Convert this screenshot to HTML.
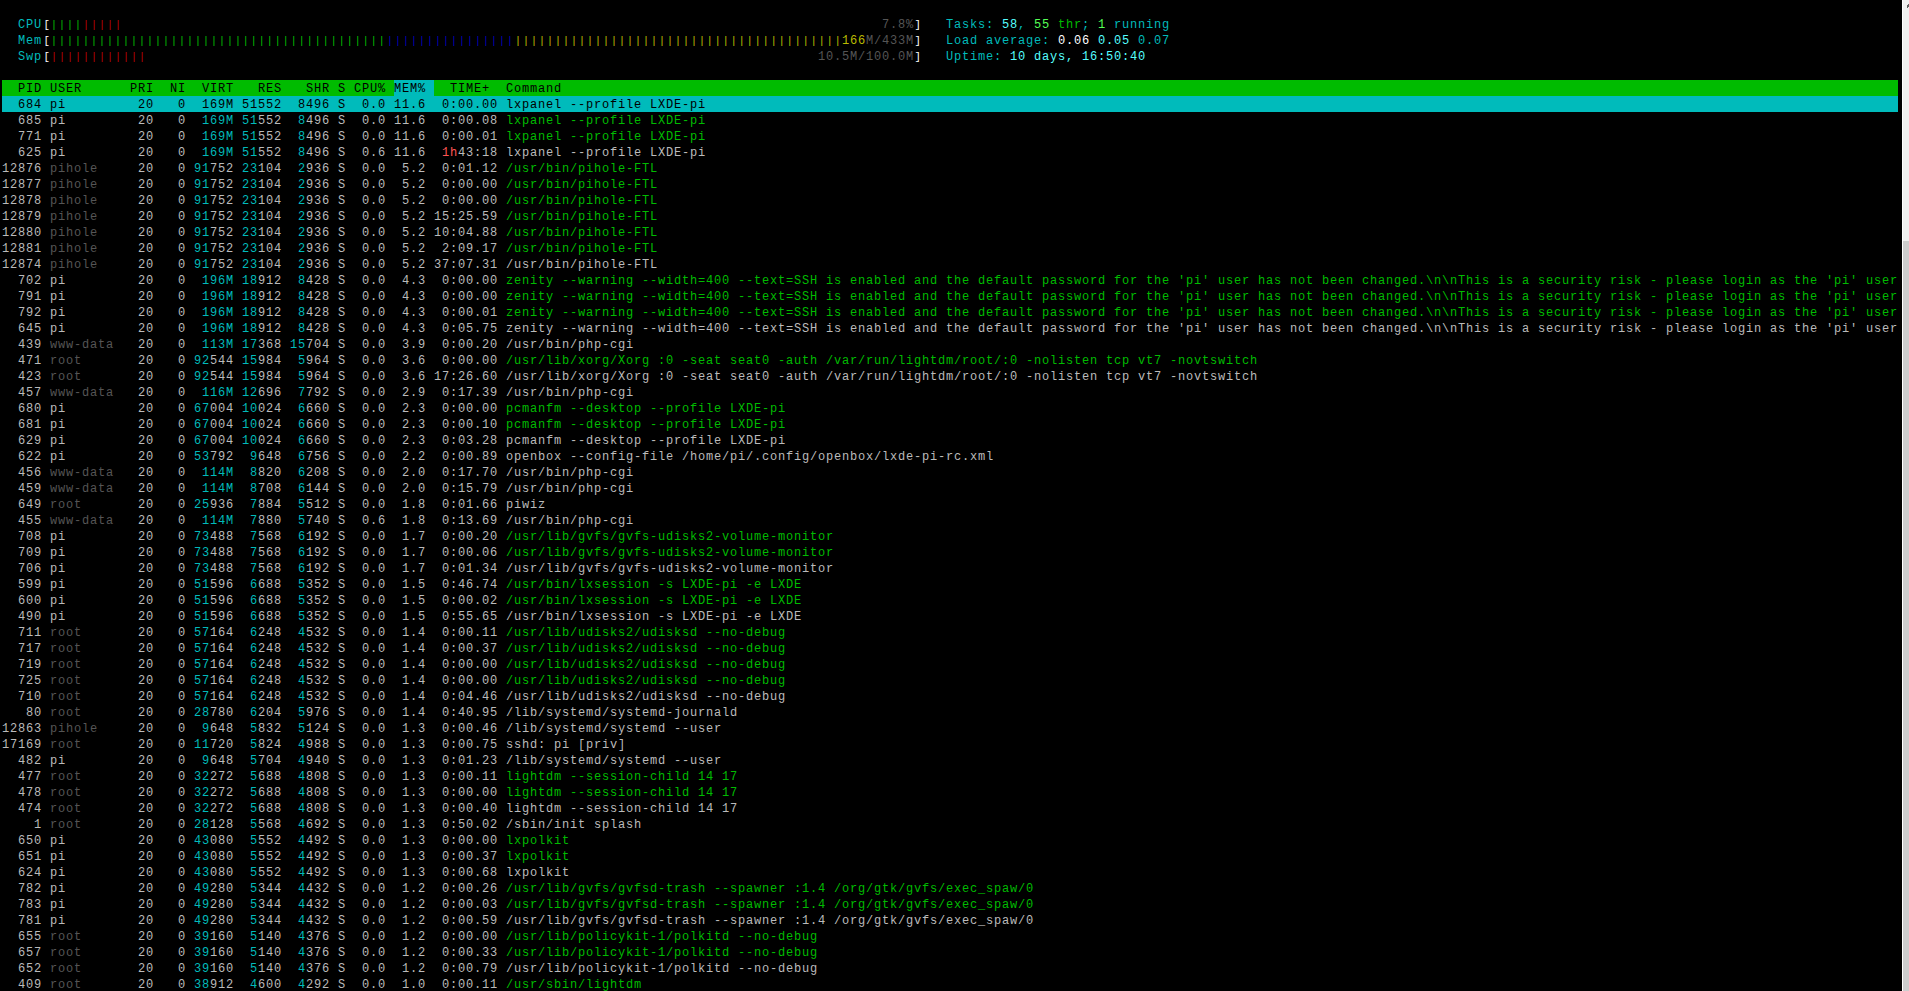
<!DOCTYPE html>
<html lang="en"><head><meta charset="utf-8"><title>htop</title>
<style>
html,body{margin:0;padding:0;background:#000;}
body{width:1909px;height:991px;overflow:hidden;position:relative;}
#term{position:absolute;left:0;top:1.0px;width:1902px;height:991px;font-family:"Liberation Mono","DejaVu Sans Mono",monospace;font-size:12.0px;letter-spacing:0.7988px;line-height:16px;color:#bbb;}
#term span.b{font-size:10.7px;letter-spacing:1.5790px;}
#term span{position:absolute;white-space:pre;height:16px;display:block;}
.bar{position:absolute;left:2px;width:1896px;height:16px;margin-top:-1.0px;}
#sb{position:absolute;left:1902px;top:0;width:7px;height:991px;background:#f0f0f0;border-left:1px solid #fff;box-sizing:border-box;}
#thumb{position:absolute;left:0;top:241px;width:6px;height:750px;background:#cdcdcd;}
</style></head>
<body>
<div id="term">
<span style="left:18px;top:16px;color:#00bbbb;">CPU</span>
<span class="b" style="left:43.6px;top:16px;color:#ffffff;">[</span>
<span class="b" style="left:50.8px;top:16px;color:#00bb00;">||||</span>
<span class="b" style="left:82.8px;top:16px;color:#bb0000;">|||||</span>
<span style="left:882px;top:16px;color:#555555;">7.8%</span>
<span class="b" style="left:914.5px;top:16px;color:#ffffff;">]</span>
<span style="left:18px;top:32px;color:#00bbbb;">Mem</span>
<span class="b" style="left:43.6px;top:32px;color:#ffffff;">[</span>
<span class="b" style="left:50.8px;top:32px;color:#00bb00;">||||||||||||||||||||||||||||||||||||||||||</span>
<span class="b" style="left:386.8px;top:32px;color:#0000bb;">||||||||||||||||</span>
<span class="b" style="left:514.8px;top:32px;color:#bbbb00;">|||||||||||||||||||||||||||||||||||||||||</span>
<span style="left:842px;top:32px;color:#bbbb00;">166</span>
<span style="left:866px;top:32px;color:#555555;">M/433M</span>
<span class="b" style="left:914.5px;top:32px;color:#ffffff;">]</span>
<span style="left:18px;top:48px;color:#00bbbb;">Swp</span>
<span class="b" style="left:43.6px;top:48px;color:#ffffff;">[</span>
<span class="b" style="left:50.8px;top:48px;color:#bb0000;">||||||||||||</span>
<span style="left:818px;top:48px;color:#555555;">10.5M/100.0M</span>
<span class="b" style="left:914.5px;top:48px;color:#ffffff;">]</span>
<span style="left:946px;top:16px;color:#00bbbb;">Tasks:</span>
<span style="left:1002px;top:16px;color:#55ffff;">58</span>
<span style="left:1018px;top:16px;color:#00bbbb;">,</span>
<span style="left:1034px;top:16px;color:#55ff55;">55</span>
<span style="left:1058px;top:16px;color:#00bb00;">thr</span>
<span style="left:1082px;top:16px;color:#00bbbb;">;</span>
<span style="left:1098px;top:16px;color:#55ff55;">1</span>
<span style="left:1114px;top:16px;color:#00bbbb;">running</span>
<span style="left:946px;top:32px;color:#00bbbb;">Load average:</span>
<span style="left:1058px;top:32px;color:#ffffff;">0.06</span>
<span style="left:1098px;top:32px;color:#55ffff;">0.05</span>
<span style="left:1138px;top:32px;color:#00bbbb;">0.07</span>
<span style="left:946px;top:48px;color:#00bbbb;">Uptime:</span>
<span style="left:1010px;top:48px;color:#55ffff;">10 days, 16:50:40</span>
<div class="bar" style="top:80px;background:#00bb00"></div>
<div class="bar" style="top:80px;left:394px;width:40px;background:#00bbbb"></div>
<span style="left:18px;top:80px;color:#000000;">PID USER      PRI  NI  VIRT   RES   SHR S CPU%</span>
<span style="left:394px;top:80px;color:#000000;">MEM%</span>
<span style="left:450px;top:80px;color:#000000;">TIME+  Command</span>
<div class="bar" style="top:96px;background:#00bbbb"></div>
<span style="left:2px;top:96px;color:#000000;">  684 pi         20   0  169M 51552  8496 S  0.0 11.6  0:00.00 lxpanel --profile LXDE-pi</span>
<span style="left:18px;top:112px;color:#bbbbbb;">685 pi         20   0</span>
<span style="left:202px;top:112px;color:#00bbbb;">169M 51</span>
<span style="left:258px;top:112px;color:#bbbbbb;">552</span>
<span style="left:298px;top:112px;color:#00bbbb;">8</span>
<span style="left:306px;top:112px;color:#bbbbbb;">496 S  0.0 11.6  0:00.08</span>
<span style="left:506px;top:112px;color:#00bb00;">lxpanel --profile LXDE-pi</span>
<span style="left:18px;top:128px;color:#bbbbbb;">771 pi         20   0</span>
<span style="left:202px;top:128px;color:#00bbbb;">169M 51</span>
<span style="left:258px;top:128px;color:#bbbbbb;">552</span>
<span style="left:298px;top:128px;color:#00bbbb;">8</span>
<span style="left:306px;top:128px;color:#bbbbbb;">496 S  0.0 11.6  0:00.01</span>
<span style="left:506px;top:128px;color:#00bb00;">lxpanel --profile LXDE-pi</span>
<span style="left:18px;top:144px;color:#bbbbbb;">625 pi         20   0</span>
<span style="left:202px;top:144px;color:#00bbbb;">169M 51</span>
<span style="left:258px;top:144px;color:#bbbbbb;">552</span>
<span style="left:298px;top:144px;color:#00bbbb;">8</span>
<span style="left:306px;top:144px;color:#bbbbbb;">496 S  0.6 11.6</span>
<span style="left:442px;top:144px;color:#ff5555;">1h</span>
<span style="left:458px;top:144px;color:#bbbbbb;">43:18 lxpanel --profile LXDE-pi</span>
<span style="left:2px;top:160px;color:#bbbbbb;">12876</span>
<span style="left:50px;top:160px;color:#555555;">pihole</span>
<span style="left:138px;top:160px;color:#bbbbbb;">20   0</span>
<span style="left:194px;top:160px;color:#00bbbb;">91</span>
<span style="left:210px;top:160px;color:#bbbbbb;">752</span>
<span style="left:242px;top:160px;color:#00bbbb;">23</span>
<span style="left:258px;top:160px;color:#bbbbbb;">104</span>
<span style="left:298px;top:160px;color:#00bbbb;">2</span>
<span style="left:306px;top:160px;color:#bbbbbb;">936 S  0.0  5.2  0:01.12</span>
<span style="left:506px;top:160px;color:#00bb00;">/usr/bin/pihole-FTL</span>
<span style="left:2px;top:176px;color:#bbbbbb;">12877</span>
<span style="left:50px;top:176px;color:#555555;">pihole</span>
<span style="left:138px;top:176px;color:#bbbbbb;">20   0</span>
<span style="left:194px;top:176px;color:#00bbbb;">91</span>
<span style="left:210px;top:176px;color:#bbbbbb;">752</span>
<span style="left:242px;top:176px;color:#00bbbb;">23</span>
<span style="left:258px;top:176px;color:#bbbbbb;">104</span>
<span style="left:298px;top:176px;color:#00bbbb;">2</span>
<span style="left:306px;top:176px;color:#bbbbbb;">936 S  0.0  5.2  0:00.00</span>
<span style="left:506px;top:176px;color:#00bb00;">/usr/bin/pihole-FTL</span>
<span style="left:2px;top:192px;color:#bbbbbb;">12878</span>
<span style="left:50px;top:192px;color:#555555;">pihole</span>
<span style="left:138px;top:192px;color:#bbbbbb;">20   0</span>
<span style="left:194px;top:192px;color:#00bbbb;">91</span>
<span style="left:210px;top:192px;color:#bbbbbb;">752</span>
<span style="left:242px;top:192px;color:#00bbbb;">23</span>
<span style="left:258px;top:192px;color:#bbbbbb;">104</span>
<span style="left:298px;top:192px;color:#00bbbb;">2</span>
<span style="left:306px;top:192px;color:#bbbbbb;">936 S  0.0  5.2  0:00.00</span>
<span style="left:506px;top:192px;color:#00bb00;">/usr/bin/pihole-FTL</span>
<span style="left:2px;top:208px;color:#bbbbbb;">12879</span>
<span style="left:50px;top:208px;color:#555555;">pihole</span>
<span style="left:138px;top:208px;color:#bbbbbb;">20   0</span>
<span style="left:194px;top:208px;color:#00bbbb;">91</span>
<span style="left:210px;top:208px;color:#bbbbbb;">752</span>
<span style="left:242px;top:208px;color:#00bbbb;">23</span>
<span style="left:258px;top:208px;color:#bbbbbb;">104</span>
<span style="left:298px;top:208px;color:#00bbbb;">2</span>
<span style="left:306px;top:208px;color:#bbbbbb;">936 S  0.0  5.2 15:25.59</span>
<span style="left:506px;top:208px;color:#00bb00;">/usr/bin/pihole-FTL</span>
<span style="left:2px;top:224px;color:#bbbbbb;">12880</span>
<span style="left:50px;top:224px;color:#555555;">pihole</span>
<span style="left:138px;top:224px;color:#bbbbbb;">20   0</span>
<span style="left:194px;top:224px;color:#00bbbb;">91</span>
<span style="left:210px;top:224px;color:#bbbbbb;">752</span>
<span style="left:242px;top:224px;color:#00bbbb;">23</span>
<span style="left:258px;top:224px;color:#bbbbbb;">104</span>
<span style="left:298px;top:224px;color:#00bbbb;">2</span>
<span style="left:306px;top:224px;color:#bbbbbb;">936 S  0.0  5.2 10:04.88</span>
<span style="left:506px;top:224px;color:#00bb00;">/usr/bin/pihole-FTL</span>
<span style="left:2px;top:240px;color:#bbbbbb;">12881</span>
<span style="left:50px;top:240px;color:#555555;">pihole</span>
<span style="left:138px;top:240px;color:#bbbbbb;">20   0</span>
<span style="left:194px;top:240px;color:#00bbbb;">91</span>
<span style="left:210px;top:240px;color:#bbbbbb;">752</span>
<span style="left:242px;top:240px;color:#00bbbb;">23</span>
<span style="left:258px;top:240px;color:#bbbbbb;">104</span>
<span style="left:298px;top:240px;color:#00bbbb;">2</span>
<span style="left:306px;top:240px;color:#bbbbbb;">936 S  0.0  5.2  2:09.17</span>
<span style="left:506px;top:240px;color:#00bb00;">/usr/bin/pihole-FTL</span>
<span style="left:2px;top:256px;color:#bbbbbb;">12874</span>
<span style="left:50px;top:256px;color:#555555;">pihole</span>
<span style="left:138px;top:256px;color:#bbbbbb;">20   0</span>
<span style="left:194px;top:256px;color:#00bbbb;">91</span>
<span style="left:210px;top:256px;color:#bbbbbb;">752</span>
<span style="left:242px;top:256px;color:#00bbbb;">23</span>
<span style="left:258px;top:256px;color:#bbbbbb;">104</span>
<span style="left:298px;top:256px;color:#00bbbb;">2</span>
<span style="left:306px;top:256px;color:#bbbbbb;">936 S  0.0  5.2 37:07.31 /usr/bin/pihole-FTL</span>
<span style="left:18px;top:272px;color:#bbbbbb;">702 pi         20   0</span>
<span style="left:202px;top:272px;color:#00bbbb;">196M 18</span>
<span style="left:258px;top:272px;color:#bbbbbb;">912</span>
<span style="left:298px;top:272px;color:#00bbbb;">8</span>
<span style="left:306px;top:272px;color:#bbbbbb;">428 S  0.0  4.3  0:00.00</span>
<span style="left:506px;top:272px;color:#00bb00;">zenity --warning --width=400 --text=SSH is enabled and the default password for the 'pi' user has not been changed.\n\nThis is a security risk - please login as the 'pi' user</span>
<span style="left:18px;top:288px;color:#bbbbbb;">791 pi         20   0</span>
<span style="left:202px;top:288px;color:#00bbbb;">196M 18</span>
<span style="left:258px;top:288px;color:#bbbbbb;">912</span>
<span style="left:298px;top:288px;color:#00bbbb;">8</span>
<span style="left:306px;top:288px;color:#bbbbbb;">428 S  0.0  4.3  0:00.00</span>
<span style="left:506px;top:288px;color:#00bb00;">zenity --warning --width=400 --text=SSH is enabled and the default password for the 'pi' user has not been changed.\n\nThis is a security risk - please login as the 'pi' user</span>
<span style="left:18px;top:304px;color:#bbbbbb;">792 pi         20   0</span>
<span style="left:202px;top:304px;color:#00bbbb;">196M 18</span>
<span style="left:258px;top:304px;color:#bbbbbb;">912</span>
<span style="left:298px;top:304px;color:#00bbbb;">8</span>
<span style="left:306px;top:304px;color:#bbbbbb;">428 S  0.0  4.3  0:00.01</span>
<span style="left:506px;top:304px;color:#00bb00;">zenity --warning --width=400 --text=SSH is enabled and the default password for the 'pi' user has not been changed.\n\nThis is a security risk - please login as the 'pi' user</span>
<span style="left:18px;top:320px;color:#bbbbbb;">645 pi         20   0</span>
<span style="left:202px;top:320px;color:#00bbbb;">196M 18</span>
<span style="left:258px;top:320px;color:#bbbbbb;">912</span>
<span style="left:298px;top:320px;color:#00bbbb;">8</span>
<span style="left:306px;top:320px;color:#bbbbbb;">428 S  0.0  4.3  0:05.75 zenity --warning --width=400 --text=SSH is enabled and the default password for the 'pi' user has not been changed.\n\nThis is a security risk - please login as the 'pi' user</span>
<span style="left:18px;top:336px;color:#bbbbbb;">439</span>
<span style="left:50px;top:336px;color:#555555;">www-data</span>
<span style="left:138px;top:336px;color:#bbbbbb;">20   0</span>
<span style="left:202px;top:336px;color:#00bbbb;">113M 17</span>
<span style="left:258px;top:336px;color:#bbbbbb;">368</span>
<span style="left:290px;top:336px;color:#00bbbb;">15</span>
<span style="left:306px;top:336px;color:#bbbbbb;">704 S  0.0  3.9  0:00.20 /usr/bin/php-cgi</span>
<span style="left:18px;top:352px;color:#bbbbbb;">471</span>
<span style="left:50px;top:352px;color:#555555;">root</span>
<span style="left:138px;top:352px;color:#bbbbbb;">20   0</span>
<span style="left:194px;top:352px;color:#00bbbb;">92</span>
<span style="left:210px;top:352px;color:#bbbbbb;">544</span>
<span style="left:242px;top:352px;color:#00bbbb;">15</span>
<span style="left:258px;top:352px;color:#bbbbbb;">984</span>
<span style="left:298px;top:352px;color:#00bbbb;">5</span>
<span style="left:306px;top:352px;color:#bbbbbb;">964 S  0.0  3.6  0:00.00</span>
<span style="left:506px;top:352px;color:#00bb00;">/usr/lib/xorg/Xorg :0 -seat seat0 -auth /var/run/lightdm/root/:0 -nolisten tcp vt7 -novtswitch</span>
<span style="left:18px;top:368px;color:#bbbbbb;">423</span>
<span style="left:50px;top:368px;color:#555555;">root</span>
<span style="left:138px;top:368px;color:#bbbbbb;">20   0</span>
<span style="left:194px;top:368px;color:#00bbbb;">92</span>
<span style="left:210px;top:368px;color:#bbbbbb;">544</span>
<span style="left:242px;top:368px;color:#00bbbb;">15</span>
<span style="left:258px;top:368px;color:#bbbbbb;">984</span>
<span style="left:298px;top:368px;color:#00bbbb;">5</span>
<span style="left:306px;top:368px;color:#bbbbbb;">964 S  0.0  3.6 17:26.60 /usr/lib/xorg/Xorg :0 -seat seat0 -auth /var/run/lightdm/root/:0 -nolisten tcp vt7 -novtswitch</span>
<span style="left:18px;top:384px;color:#bbbbbb;">457</span>
<span style="left:50px;top:384px;color:#555555;">www-data</span>
<span style="left:138px;top:384px;color:#bbbbbb;">20   0</span>
<span style="left:202px;top:384px;color:#00bbbb;">116M 12</span>
<span style="left:258px;top:384px;color:#bbbbbb;">696</span>
<span style="left:298px;top:384px;color:#00bbbb;">7</span>
<span style="left:306px;top:384px;color:#bbbbbb;">792 S  0.0  2.9  0:17.39 /usr/bin/php-cgi</span>
<span style="left:18px;top:400px;color:#bbbbbb;">680 pi         20   0</span>
<span style="left:194px;top:400px;color:#00bbbb;">67</span>
<span style="left:210px;top:400px;color:#bbbbbb;">004</span>
<span style="left:242px;top:400px;color:#00bbbb;">10</span>
<span style="left:258px;top:400px;color:#bbbbbb;">024</span>
<span style="left:298px;top:400px;color:#00bbbb;">6</span>
<span style="left:306px;top:400px;color:#bbbbbb;">660 S  0.0  2.3  0:00.00</span>
<span style="left:506px;top:400px;color:#00bb00;">pcmanfm --desktop --profile LXDE-pi</span>
<span style="left:18px;top:416px;color:#bbbbbb;">681 pi         20   0</span>
<span style="left:194px;top:416px;color:#00bbbb;">67</span>
<span style="left:210px;top:416px;color:#bbbbbb;">004</span>
<span style="left:242px;top:416px;color:#00bbbb;">10</span>
<span style="left:258px;top:416px;color:#bbbbbb;">024</span>
<span style="left:298px;top:416px;color:#00bbbb;">6</span>
<span style="left:306px;top:416px;color:#bbbbbb;">660 S  0.0  2.3  0:00.10</span>
<span style="left:506px;top:416px;color:#00bb00;">pcmanfm --desktop --profile LXDE-pi</span>
<span style="left:18px;top:432px;color:#bbbbbb;">629 pi         20   0</span>
<span style="left:194px;top:432px;color:#00bbbb;">67</span>
<span style="left:210px;top:432px;color:#bbbbbb;">004</span>
<span style="left:242px;top:432px;color:#00bbbb;">10</span>
<span style="left:258px;top:432px;color:#bbbbbb;">024</span>
<span style="left:298px;top:432px;color:#00bbbb;">6</span>
<span style="left:306px;top:432px;color:#bbbbbb;">660 S  0.0  2.3  0:03.28 pcmanfm --desktop --profile LXDE-pi</span>
<span style="left:18px;top:448px;color:#bbbbbb;">622 pi         20   0</span>
<span style="left:194px;top:448px;color:#00bbbb;">53</span>
<span style="left:210px;top:448px;color:#bbbbbb;">792</span>
<span style="left:250px;top:448px;color:#00bbbb;">9</span>
<span style="left:258px;top:448px;color:#bbbbbb;">648</span>
<span style="left:298px;top:448px;color:#00bbbb;">6</span>
<span style="left:306px;top:448px;color:#bbbbbb;">756 S  0.0  2.2  0:00.89 openbox --config-file /home/pi/.config/openbox/lxde-pi-rc.xml</span>
<span style="left:18px;top:464px;color:#bbbbbb;">456</span>
<span style="left:50px;top:464px;color:#555555;">www-data</span>
<span style="left:138px;top:464px;color:#bbbbbb;">20   0</span>
<span style="left:202px;top:464px;color:#00bbbb;">114M  8</span>
<span style="left:258px;top:464px;color:#bbbbbb;">820</span>
<span style="left:298px;top:464px;color:#00bbbb;">6</span>
<span style="left:306px;top:464px;color:#bbbbbb;">208 S  0.0  2.0  0:17.70 /usr/bin/php-cgi</span>
<span style="left:18px;top:480px;color:#bbbbbb;">459</span>
<span style="left:50px;top:480px;color:#555555;">www-data</span>
<span style="left:138px;top:480px;color:#bbbbbb;">20   0</span>
<span style="left:202px;top:480px;color:#00bbbb;">114M  8</span>
<span style="left:258px;top:480px;color:#bbbbbb;">708</span>
<span style="left:298px;top:480px;color:#00bbbb;">6</span>
<span style="left:306px;top:480px;color:#bbbbbb;">144 S  0.0  2.0  0:15.79 /usr/bin/php-cgi</span>
<span style="left:18px;top:496px;color:#bbbbbb;">649</span>
<span style="left:50px;top:496px;color:#555555;">root</span>
<span style="left:138px;top:496px;color:#bbbbbb;">20   0</span>
<span style="left:194px;top:496px;color:#00bbbb;">25</span>
<span style="left:210px;top:496px;color:#bbbbbb;">936</span>
<span style="left:250px;top:496px;color:#00bbbb;">7</span>
<span style="left:258px;top:496px;color:#bbbbbb;">884</span>
<span style="left:298px;top:496px;color:#00bbbb;">5</span>
<span style="left:306px;top:496px;color:#bbbbbb;">512 S  0.0  1.8  0:01.66 piwiz</span>
<span style="left:18px;top:512px;color:#bbbbbb;">455</span>
<span style="left:50px;top:512px;color:#555555;">www-data</span>
<span style="left:138px;top:512px;color:#bbbbbb;">20   0</span>
<span style="left:202px;top:512px;color:#00bbbb;">114M  7</span>
<span style="left:258px;top:512px;color:#bbbbbb;">880</span>
<span style="left:298px;top:512px;color:#00bbbb;">5</span>
<span style="left:306px;top:512px;color:#bbbbbb;">740 S  0.6  1.8  0:13.69 /usr/bin/php-cgi</span>
<span style="left:18px;top:528px;color:#bbbbbb;">708 pi         20   0</span>
<span style="left:194px;top:528px;color:#00bbbb;">73</span>
<span style="left:210px;top:528px;color:#bbbbbb;">488</span>
<span style="left:250px;top:528px;color:#00bbbb;">7</span>
<span style="left:258px;top:528px;color:#bbbbbb;">568</span>
<span style="left:298px;top:528px;color:#00bbbb;">6</span>
<span style="left:306px;top:528px;color:#bbbbbb;">192 S  0.0  1.7  0:00.20</span>
<span style="left:506px;top:528px;color:#00bb00;">/usr/lib/gvfs/gvfs-udisks2-volume-monitor</span>
<span style="left:18px;top:544px;color:#bbbbbb;">709 pi         20   0</span>
<span style="left:194px;top:544px;color:#00bbbb;">73</span>
<span style="left:210px;top:544px;color:#bbbbbb;">488</span>
<span style="left:250px;top:544px;color:#00bbbb;">7</span>
<span style="left:258px;top:544px;color:#bbbbbb;">568</span>
<span style="left:298px;top:544px;color:#00bbbb;">6</span>
<span style="left:306px;top:544px;color:#bbbbbb;">192 S  0.0  1.7  0:00.06</span>
<span style="left:506px;top:544px;color:#00bb00;">/usr/lib/gvfs/gvfs-udisks2-volume-monitor</span>
<span style="left:18px;top:560px;color:#bbbbbb;">706 pi         20   0</span>
<span style="left:194px;top:560px;color:#00bbbb;">73</span>
<span style="left:210px;top:560px;color:#bbbbbb;">488</span>
<span style="left:250px;top:560px;color:#00bbbb;">7</span>
<span style="left:258px;top:560px;color:#bbbbbb;">568</span>
<span style="left:298px;top:560px;color:#00bbbb;">6</span>
<span style="left:306px;top:560px;color:#bbbbbb;">192 S  0.0  1.7  0:01.34 /usr/lib/gvfs/gvfs-udisks2-volume-monitor</span>
<span style="left:18px;top:576px;color:#bbbbbb;">599 pi         20   0</span>
<span style="left:194px;top:576px;color:#00bbbb;">51</span>
<span style="left:210px;top:576px;color:#bbbbbb;">596</span>
<span style="left:250px;top:576px;color:#00bbbb;">6</span>
<span style="left:258px;top:576px;color:#bbbbbb;">688</span>
<span style="left:298px;top:576px;color:#00bbbb;">5</span>
<span style="left:306px;top:576px;color:#bbbbbb;">352 S  0.0  1.5  0:46.74</span>
<span style="left:506px;top:576px;color:#00bb00;">/usr/bin/lxsession -s LXDE-pi -e LXDE</span>
<span style="left:18px;top:592px;color:#bbbbbb;">600 pi         20   0</span>
<span style="left:194px;top:592px;color:#00bbbb;">51</span>
<span style="left:210px;top:592px;color:#bbbbbb;">596</span>
<span style="left:250px;top:592px;color:#00bbbb;">6</span>
<span style="left:258px;top:592px;color:#bbbbbb;">688</span>
<span style="left:298px;top:592px;color:#00bbbb;">5</span>
<span style="left:306px;top:592px;color:#bbbbbb;">352 S  0.0  1.5  0:00.02</span>
<span style="left:506px;top:592px;color:#00bb00;">/usr/bin/lxsession -s LXDE-pi -e LXDE</span>
<span style="left:18px;top:608px;color:#bbbbbb;">490 pi         20   0</span>
<span style="left:194px;top:608px;color:#00bbbb;">51</span>
<span style="left:210px;top:608px;color:#bbbbbb;">596</span>
<span style="left:250px;top:608px;color:#00bbbb;">6</span>
<span style="left:258px;top:608px;color:#bbbbbb;">688</span>
<span style="left:298px;top:608px;color:#00bbbb;">5</span>
<span style="left:306px;top:608px;color:#bbbbbb;">352 S  0.0  1.5  0:55.65 /usr/bin/lxsession -s LXDE-pi -e LXDE</span>
<span style="left:18px;top:624px;color:#bbbbbb;">711</span>
<span style="left:50px;top:624px;color:#555555;">root</span>
<span style="left:138px;top:624px;color:#bbbbbb;">20   0</span>
<span style="left:194px;top:624px;color:#00bbbb;">57</span>
<span style="left:210px;top:624px;color:#bbbbbb;">164</span>
<span style="left:250px;top:624px;color:#00bbbb;">6</span>
<span style="left:258px;top:624px;color:#bbbbbb;">248</span>
<span style="left:298px;top:624px;color:#00bbbb;">4</span>
<span style="left:306px;top:624px;color:#bbbbbb;">532 S  0.0  1.4  0:00.11</span>
<span style="left:506px;top:624px;color:#00bb00;">/usr/lib/udisks2/udisksd --no-debug</span>
<span style="left:18px;top:640px;color:#bbbbbb;">717</span>
<span style="left:50px;top:640px;color:#555555;">root</span>
<span style="left:138px;top:640px;color:#bbbbbb;">20   0</span>
<span style="left:194px;top:640px;color:#00bbbb;">57</span>
<span style="left:210px;top:640px;color:#bbbbbb;">164</span>
<span style="left:250px;top:640px;color:#00bbbb;">6</span>
<span style="left:258px;top:640px;color:#bbbbbb;">248</span>
<span style="left:298px;top:640px;color:#00bbbb;">4</span>
<span style="left:306px;top:640px;color:#bbbbbb;">532 S  0.0  1.4  0:00.37</span>
<span style="left:506px;top:640px;color:#00bb00;">/usr/lib/udisks2/udisksd --no-debug</span>
<span style="left:18px;top:656px;color:#bbbbbb;">719</span>
<span style="left:50px;top:656px;color:#555555;">root</span>
<span style="left:138px;top:656px;color:#bbbbbb;">20   0</span>
<span style="left:194px;top:656px;color:#00bbbb;">57</span>
<span style="left:210px;top:656px;color:#bbbbbb;">164</span>
<span style="left:250px;top:656px;color:#00bbbb;">6</span>
<span style="left:258px;top:656px;color:#bbbbbb;">248</span>
<span style="left:298px;top:656px;color:#00bbbb;">4</span>
<span style="left:306px;top:656px;color:#bbbbbb;">532 S  0.0  1.4  0:00.00</span>
<span style="left:506px;top:656px;color:#00bb00;">/usr/lib/udisks2/udisksd --no-debug</span>
<span style="left:18px;top:672px;color:#bbbbbb;">725</span>
<span style="left:50px;top:672px;color:#555555;">root</span>
<span style="left:138px;top:672px;color:#bbbbbb;">20   0</span>
<span style="left:194px;top:672px;color:#00bbbb;">57</span>
<span style="left:210px;top:672px;color:#bbbbbb;">164</span>
<span style="left:250px;top:672px;color:#00bbbb;">6</span>
<span style="left:258px;top:672px;color:#bbbbbb;">248</span>
<span style="left:298px;top:672px;color:#00bbbb;">4</span>
<span style="left:306px;top:672px;color:#bbbbbb;">532 S  0.0  1.4  0:00.00</span>
<span style="left:506px;top:672px;color:#00bb00;">/usr/lib/udisks2/udisksd --no-debug</span>
<span style="left:18px;top:688px;color:#bbbbbb;">710</span>
<span style="left:50px;top:688px;color:#555555;">root</span>
<span style="left:138px;top:688px;color:#bbbbbb;">20   0</span>
<span style="left:194px;top:688px;color:#00bbbb;">57</span>
<span style="left:210px;top:688px;color:#bbbbbb;">164</span>
<span style="left:250px;top:688px;color:#00bbbb;">6</span>
<span style="left:258px;top:688px;color:#bbbbbb;">248</span>
<span style="left:298px;top:688px;color:#00bbbb;">4</span>
<span style="left:306px;top:688px;color:#bbbbbb;">532 S  0.0  1.4  0:04.46 /usr/lib/udisks2/udisksd --no-debug</span>
<span style="left:26px;top:704px;color:#bbbbbb;">80</span>
<span style="left:50px;top:704px;color:#555555;">root</span>
<span style="left:138px;top:704px;color:#bbbbbb;">20   0</span>
<span style="left:194px;top:704px;color:#00bbbb;">28</span>
<span style="left:210px;top:704px;color:#bbbbbb;">780</span>
<span style="left:250px;top:704px;color:#00bbbb;">6</span>
<span style="left:258px;top:704px;color:#bbbbbb;">204</span>
<span style="left:298px;top:704px;color:#00bbbb;">5</span>
<span style="left:306px;top:704px;color:#bbbbbb;">976 S  0.0  1.4  0:40.95 /lib/systemd/systemd-journald</span>
<span style="left:2px;top:720px;color:#bbbbbb;">12863</span>
<span style="left:50px;top:720px;color:#555555;">pihole</span>
<span style="left:138px;top:720px;color:#bbbbbb;">20   0</span>
<span style="left:202px;top:720px;color:#00bbbb;">9</span>
<span style="left:210px;top:720px;color:#bbbbbb;">648</span>
<span style="left:250px;top:720px;color:#00bbbb;">5</span>
<span style="left:258px;top:720px;color:#bbbbbb;">832</span>
<span style="left:298px;top:720px;color:#00bbbb;">5</span>
<span style="left:306px;top:720px;color:#bbbbbb;">124 S  0.0  1.3  0:00.46 /lib/systemd/systemd --user</span>
<span style="left:2px;top:736px;color:#bbbbbb;">17169</span>
<span style="left:50px;top:736px;color:#555555;">root</span>
<span style="left:138px;top:736px;color:#bbbbbb;">20   0</span>
<span style="left:194px;top:736px;color:#00bbbb;">11</span>
<span style="left:210px;top:736px;color:#bbbbbb;">720</span>
<span style="left:250px;top:736px;color:#00bbbb;">5</span>
<span style="left:258px;top:736px;color:#bbbbbb;">824</span>
<span style="left:298px;top:736px;color:#00bbbb;">4</span>
<span style="left:306px;top:736px;color:#bbbbbb;">988 S  0.0  1.3  0:00.75 sshd: pi [priv]</span>
<span style="left:18px;top:752px;color:#bbbbbb;">482 pi         20   0</span>
<span style="left:202px;top:752px;color:#00bbbb;">9</span>
<span style="left:210px;top:752px;color:#bbbbbb;">648</span>
<span style="left:250px;top:752px;color:#00bbbb;">5</span>
<span style="left:258px;top:752px;color:#bbbbbb;">704</span>
<span style="left:298px;top:752px;color:#00bbbb;">4</span>
<span style="left:306px;top:752px;color:#bbbbbb;">940 S  0.0  1.3  0:01.23 /lib/systemd/systemd --user</span>
<span style="left:18px;top:768px;color:#bbbbbb;">477</span>
<span style="left:50px;top:768px;color:#555555;">root</span>
<span style="left:138px;top:768px;color:#bbbbbb;">20   0</span>
<span style="left:194px;top:768px;color:#00bbbb;">32</span>
<span style="left:210px;top:768px;color:#bbbbbb;">272</span>
<span style="left:250px;top:768px;color:#00bbbb;">5</span>
<span style="left:258px;top:768px;color:#bbbbbb;">688</span>
<span style="left:298px;top:768px;color:#00bbbb;">4</span>
<span style="left:306px;top:768px;color:#bbbbbb;">808 S  0.0  1.3  0:00.11</span>
<span style="left:506px;top:768px;color:#00bb00;">lightdm --session-child 14 17</span>
<span style="left:18px;top:784px;color:#bbbbbb;">478</span>
<span style="left:50px;top:784px;color:#555555;">root</span>
<span style="left:138px;top:784px;color:#bbbbbb;">20   0</span>
<span style="left:194px;top:784px;color:#00bbbb;">32</span>
<span style="left:210px;top:784px;color:#bbbbbb;">272</span>
<span style="left:250px;top:784px;color:#00bbbb;">5</span>
<span style="left:258px;top:784px;color:#bbbbbb;">688</span>
<span style="left:298px;top:784px;color:#00bbbb;">4</span>
<span style="left:306px;top:784px;color:#bbbbbb;">808 S  0.0  1.3  0:00.00</span>
<span style="left:506px;top:784px;color:#00bb00;">lightdm --session-child 14 17</span>
<span style="left:18px;top:800px;color:#bbbbbb;">474</span>
<span style="left:50px;top:800px;color:#555555;">root</span>
<span style="left:138px;top:800px;color:#bbbbbb;">20   0</span>
<span style="left:194px;top:800px;color:#00bbbb;">32</span>
<span style="left:210px;top:800px;color:#bbbbbb;">272</span>
<span style="left:250px;top:800px;color:#00bbbb;">5</span>
<span style="left:258px;top:800px;color:#bbbbbb;">688</span>
<span style="left:298px;top:800px;color:#00bbbb;">4</span>
<span style="left:306px;top:800px;color:#bbbbbb;">808 S  0.0  1.3  0:00.40 lightdm --session-child 14 17</span>
<span style="left:34px;top:816px;color:#bbbbbb;">1</span>
<span style="left:50px;top:816px;color:#555555;">root</span>
<span style="left:138px;top:816px;color:#bbbbbb;">20   0</span>
<span style="left:194px;top:816px;color:#00bbbb;">28</span>
<span style="left:210px;top:816px;color:#bbbbbb;">128</span>
<span style="left:250px;top:816px;color:#00bbbb;">5</span>
<span style="left:258px;top:816px;color:#bbbbbb;">568</span>
<span style="left:298px;top:816px;color:#00bbbb;">4</span>
<span style="left:306px;top:816px;color:#bbbbbb;">692 S  0.0  1.3  0:50.02 /sbin/init splash</span>
<span style="left:18px;top:832px;color:#bbbbbb;">650 pi         20   0</span>
<span style="left:194px;top:832px;color:#00bbbb;">43</span>
<span style="left:210px;top:832px;color:#bbbbbb;">080</span>
<span style="left:250px;top:832px;color:#00bbbb;">5</span>
<span style="left:258px;top:832px;color:#bbbbbb;">552</span>
<span style="left:298px;top:832px;color:#00bbbb;">4</span>
<span style="left:306px;top:832px;color:#bbbbbb;">492 S  0.0  1.3  0:00.00</span>
<span style="left:506px;top:832px;color:#00bb00;">lxpolkit</span>
<span style="left:18px;top:848px;color:#bbbbbb;">651 pi         20   0</span>
<span style="left:194px;top:848px;color:#00bbbb;">43</span>
<span style="left:210px;top:848px;color:#bbbbbb;">080</span>
<span style="left:250px;top:848px;color:#00bbbb;">5</span>
<span style="left:258px;top:848px;color:#bbbbbb;">552</span>
<span style="left:298px;top:848px;color:#00bbbb;">4</span>
<span style="left:306px;top:848px;color:#bbbbbb;">492 S  0.0  1.3  0:00.37</span>
<span style="left:506px;top:848px;color:#00bb00;">lxpolkit</span>
<span style="left:18px;top:864px;color:#bbbbbb;">624 pi         20   0</span>
<span style="left:194px;top:864px;color:#00bbbb;">43</span>
<span style="left:210px;top:864px;color:#bbbbbb;">080</span>
<span style="left:250px;top:864px;color:#00bbbb;">5</span>
<span style="left:258px;top:864px;color:#bbbbbb;">552</span>
<span style="left:298px;top:864px;color:#00bbbb;">4</span>
<span style="left:306px;top:864px;color:#bbbbbb;">492 S  0.0  1.3  0:00.68 lxpolkit</span>
<span style="left:18px;top:880px;color:#bbbbbb;">782 pi         20   0</span>
<span style="left:194px;top:880px;color:#00bbbb;">49</span>
<span style="left:210px;top:880px;color:#bbbbbb;">280</span>
<span style="left:250px;top:880px;color:#00bbbb;">5</span>
<span style="left:258px;top:880px;color:#bbbbbb;">344</span>
<span style="left:298px;top:880px;color:#00bbbb;">4</span>
<span style="left:306px;top:880px;color:#bbbbbb;">432 S  0.0  1.2  0:00.26</span>
<span style="left:506px;top:880px;color:#00bb00;">/usr/lib/gvfs/gvfsd-trash --spawner :1.4 /org/gtk/gvfs/exec_spaw/0</span>
<span style="left:18px;top:896px;color:#bbbbbb;">783 pi         20   0</span>
<span style="left:194px;top:896px;color:#00bbbb;">49</span>
<span style="left:210px;top:896px;color:#bbbbbb;">280</span>
<span style="left:250px;top:896px;color:#00bbbb;">5</span>
<span style="left:258px;top:896px;color:#bbbbbb;">344</span>
<span style="left:298px;top:896px;color:#00bbbb;">4</span>
<span style="left:306px;top:896px;color:#bbbbbb;">432 S  0.0  1.2  0:00.03</span>
<span style="left:506px;top:896px;color:#00bb00;">/usr/lib/gvfs/gvfsd-trash --spawner :1.4 /org/gtk/gvfs/exec_spaw/0</span>
<span style="left:18px;top:912px;color:#bbbbbb;">781 pi         20   0</span>
<span style="left:194px;top:912px;color:#00bbbb;">49</span>
<span style="left:210px;top:912px;color:#bbbbbb;">280</span>
<span style="left:250px;top:912px;color:#00bbbb;">5</span>
<span style="left:258px;top:912px;color:#bbbbbb;">344</span>
<span style="left:298px;top:912px;color:#00bbbb;">4</span>
<span style="left:306px;top:912px;color:#bbbbbb;">432 S  0.0  1.2  0:00.59 /usr/lib/gvfs/gvfsd-trash --spawner :1.4 /org/gtk/gvfs/exec_spaw/0</span>
<span style="left:18px;top:928px;color:#bbbbbb;">655</span>
<span style="left:50px;top:928px;color:#555555;">root</span>
<span style="left:138px;top:928px;color:#bbbbbb;">20   0</span>
<span style="left:194px;top:928px;color:#00bbbb;">39</span>
<span style="left:210px;top:928px;color:#bbbbbb;">160</span>
<span style="left:250px;top:928px;color:#00bbbb;">5</span>
<span style="left:258px;top:928px;color:#bbbbbb;">140</span>
<span style="left:298px;top:928px;color:#00bbbb;">4</span>
<span style="left:306px;top:928px;color:#bbbbbb;">376 S  0.0  1.2  0:00.00</span>
<span style="left:506px;top:928px;color:#00bb00;">/usr/lib/policykit-1/polkitd --no-debug</span>
<span style="left:18px;top:944px;color:#bbbbbb;">657</span>
<span style="left:50px;top:944px;color:#555555;">root</span>
<span style="left:138px;top:944px;color:#bbbbbb;">20   0</span>
<span style="left:194px;top:944px;color:#00bbbb;">39</span>
<span style="left:210px;top:944px;color:#bbbbbb;">160</span>
<span style="left:250px;top:944px;color:#00bbbb;">5</span>
<span style="left:258px;top:944px;color:#bbbbbb;">140</span>
<span style="left:298px;top:944px;color:#00bbbb;">4</span>
<span style="left:306px;top:944px;color:#bbbbbb;">376 S  0.0  1.2  0:00.33</span>
<span style="left:506px;top:944px;color:#00bb00;">/usr/lib/policykit-1/polkitd --no-debug</span>
<span style="left:18px;top:960px;color:#bbbbbb;">652</span>
<span style="left:50px;top:960px;color:#555555;">root</span>
<span style="left:138px;top:960px;color:#bbbbbb;">20   0</span>
<span style="left:194px;top:960px;color:#00bbbb;">39</span>
<span style="left:210px;top:960px;color:#bbbbbb;">160</span>
<span style="left:250px;top:960px;color:#00bbbb;">5</span>
<span style="left:258px;top:960px;color:#bbbbbb;">140</span>
<span style="left:298px;top:960px;color:#00bbbb;">4</span>
<span style="left:306px;top:960px;color:#bbbbbb;">376 S  0.0  1.2  0:00.79 /usr/lib/policykit-1/polkitd --no-debug</span>
<span style="left:18px;top:976px;color:#bbbbbb;">409</span>
<span style="left:50px;top:976px;color:#555555;">root</span>
<span style="left:138px;top:976px;color:#bbbbbb;">20   0</span>
<span style="left:194px;top:976px;color:#00bbbb;">38</span>
<span style="left:210px;top:976px;color:#bbbbbb;">912</span>
<span style="left:250px;top:976px;color:#00bbbb;">4</span>
<span style="left:258px;top:976px;color:#bbbbbb;">600</span>
<span style="left:298px;top:976px;color:#00bbbb;">4</span>
<span style="left:306px;top:976px;color:#bbbbbb;">292 S  0.0  1.0  0:00.11</span>
<span style="left:506px;top:976px;color:#00bb00;">/usr/sbin/lightdm</span>
</div>
<div id="sb"><svg width="6" height="17" viewBox="0 0 6 17" style="position:absolute;left:0;top:0"><path d="M4 5h1v3h-1zM5 4h1v3h-1z" fill="#646464"/></svg><div id="thumb"></div></div>
</body></html>
